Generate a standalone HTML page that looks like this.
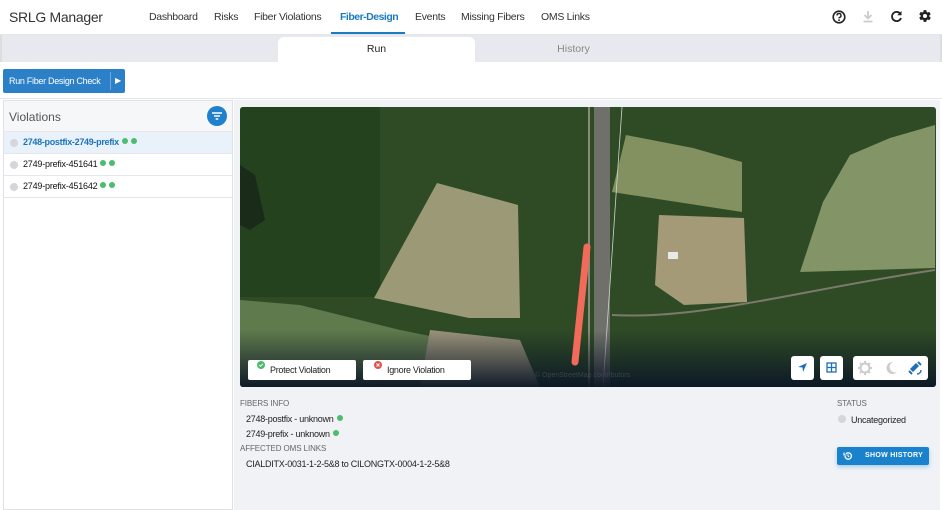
<!DOCTYPE html>
<html><head><meta charset="utf-8">
<style>
*{box-sizing:border-box;margin:0;padding:0}
body{width:942px;height:510px;overflow:hidden;font-family:"Liberation Sans",sans-serif;background:#fff;position:relative;color:#222}
.top{position:absolute;left:0;top:0;width:942px;height:35px;background:#fff;border-bottom:1px solid #e3e5ea}
.brand{position:absolute;left:9px;top:9px;font-size:14px;color:#333;letter-spacing:-0.3px}
.nav{position:absolute;top:11px;font-size:10.5px;color:#333;letter-spacing:-0.3px}
.nav.act{color:#1a7bc1;font-weight:bold;letter-spacing:-0.5px}
.uline{position:absolute;left:331px;top:32px;width:74px;height:2px;background:#1a7bc1}
.tabs{position:absolute;left:0;top:35px;width:942px;height:27px;background:#e7e9ee;border-left:2px solid #ddd;border-right:2px solid #ddd}
.tab{position:absolute;top:2px;height:26px;font-size:10.5px;text-align:center;line-height:24px}
.btn{position:absolute;left:3px;top:69px;width:122px;height:24px;background:#2b80c8;border-radius:2px;color:#fff;font-size:9px;line-height:24px;letter-spacing:-0.3px}
.left{position:absolute;left:3px;top:100px;width:230px;height:410px;background:#fff;border:1px solid #e0e2e7}
.right{position:absolute;left:234px;top:100px;width:706px;height:410px;background:#f1f2f6}
.vh{height:31px;background:#f6f7f9;border-bottom:1px solid #e5e7eb;position:relative}
.row{height:22px;border-bottom:1px solid #e5e7eb;font-size:9px;letter-spacing:-0.2px;line-height:21px;padding-left:19px;position:relative;color:#111}
.row:before{content:"";position:absolute;left:6px;top:7px;width:8px;height:8px;border-radius:50%;background:#d5d6dc}
.g{display:inline-block;width:6px;height:6px;border-radius:50%;background:#4cbc6e;margin-left:3px;vertical-align:1px}
.mb{position:absolute;top:360px;height:20px;background:#fff;border-radius:2px;font-size:9px;line-height:20px;color:#222;letter-spacing:-0.3px}
.lbl{position:absolute;font-size:8px;color:#666;letter-spacing:-0.1px}
.txt{position:absolute;font-size:9px;color:#222;letter-spacing:-0.25px}
</style></head><body>
<div class="top">
<div class="brand">SRLG Manager</div>
<div class="nav" style="left:149px">Dashboard</div>
<div class="nav" style="left:214px">Risks</div>
<div class="nav" style="left:254px">Fiber Violations</div>
<div class="nav act" style="left:340px">Fiber-Design</div>
<div class="nav" style="left:415px">Events</div>
<div class="nav" style="left:461px">Missing Fibers</div>
<div class="nav" style="left:541px">OMS Links</div>
<div class="uline"></div>
<svg style="position:absolute;left:832px;top:10px" width="14" height="14" viewBox="0 0 14 14"><circle cx="7" cy="7" r="5.8" fill="none" stroke="#222" stroke-width="1.6"/><path d="M5 5.5a2 2 0 1 1 2.6 1.9c-.5.2-.6.5-.6 1.1" fill="none" stroke="#222" stroke-width="1.4"/><circle cx="7" cy="10.2" r=".9" fill="#222"/></svg>
<svg style="position:absolute;left:862px;top:10px" width="12" height="13" viewBox="0 0 12 13"><path d="M6 1v7M2.5 5l3.5 3.5L9.5 5M1.5 11.5h9" fill="none" stroke="#ccc" stroke-width="1.8"/></svg>
<svg style="position:absolute;left:890px;top:10px" width="13" height="13" viewBox="0 0 13 13"><path d="M10.5 4A4.6 4.6 0 1 0 11 8" fill="none" stroke="#222" stroke-width="1.8"/><path d="M11.5 1v4.3H7.2z" fill="#222"/></svg>
<svg style="position:absolute;left:918px;top:9px" width="14" height="14" viewBox="0 0 24 24"><path fill="#222" d="M19.4 13c.04-.3.06-.6.06-1s-.02-.7-.06-1l2.1-1.650c.2-.15.24-.42.12-.64l-2-3.46c-.12-.22-.39-.3-.61-.22l-2.490 1c-.52-.4-1.08-.73-1.69-.98l-.38-2.65A.49.49 0 0 0 14 2h-4c-.25 0-.46.18-.49.42l-.38 2.65c-.61.25-1.170.59-1.69.98l-2.49-1c-.23-.09-.49 0-.61.22l-2 3.46c-.13.22-.07.49.12.64L4.57 11c-.04.32-.07.65-.07 1s.02.68.06 1l-2.1 1.65c-.2.15-.24.42-.12.64l2 3.46c.12.22.39.3.61.22l2.49-1c.52.4 1.08.73 1.69.98l.38 2.65c.03.24.24.42.49.42h4c.25 0 .46-.18.49-.42l.38-2.65c.61-.25 1.17-.59 1.69-.98l2.49 1c.23.09.49 0 .61-.22l2-3.46c.12-.22.07-.49-.12-.64L19.4 13zM12 15.5a3.5 3.5 0 1 1 0-7 3.5 3.5 0 0 1 0 7z"/></svg>
</div>
<div class="tabs">
<div class="tab" style="left:276px;width:197px;background:#fff;border-radius:6px 6px 0 0;color:#222">Run</div>
<div class="tab" style="left:473px;width:197px;color:#888">History</div>
</div>
<div class="btn"><span style="padding-left:6px">Run Fiber Design Check</span><span style="position:absolute;left:107px;top:3px;height:18px;border-left:1px solid #6aa7dc"></span><span style="position:absolute;left:112px;top:0;font-size:8px">&#9654;</span></div>
<div style="position:absolute;left:0;top:98px;width:942px;height:1px;background:#e3e5ea"></div>
<div class="left">
<div class="vh"><span style="position:absolute;left:5px;top:9px;font-size:12px;color:#555">Violations</span>
<svg style="position:absolute;left:203px;top:5px" width="20" height="20" viewBox="0 0 20 20"><circle cx="10" cy="10" r="10" fill="#2080cc"/><path d="M5 7h10M7 10h6M8.7 13h2.6" stroke="#fff" stroke-width="1.6"/></svg></div>
<div class="row" style="background:#e9f2fa;color:#1a73bb;font-weight:bold;letter-spacing:-0.3px">2748-postfix-2749-prefix<span class="g"></span><span class="g"></span></div>
<div class="row">2749-prefix-451641<span class="g"></span><span class="g"></span></div>
<div class="row">2749-prefix-451642<span class="g"></span><span class="g"></span></div>
</div>
<div class="right"></div>
<svg style="position:absolute;left:240px;top:107px;border-radius:3px" width="696" height="280" viewBox="240 107 696 280">
<defs><linearGradient id="dk" x1="0" y1="0" x2="0" y2="1"><stop offset="0" stop-color="#0b1626" stop-opacity="0"/><stop offset="1" stop-color="#0b1626" stop-opacity=".95"/></linearGradient></defs>
<rect x="240" y="107" width="696" height="280" fill="#2e4b25"/>
<rect x="240" y="107" width="140" height="190" fill="#25421f"/>
<path d="M240 165 L255 175 L265 220 L250 230 L240 225Z" fill="#1a2b1a"/>
<path d="M437 183 L518 205 L520 318 L469 318 L374 298 L392 265Z" fill="#9c9a76"/>
<path d="M659 215 L744 218 L747 302 L684 305 L655 285Z" fill="#a49a78"/>
<path d="M626 135 L693 148 L742 162 L742 212 L612 192Z" fill="#83905f"/>
<path d="M850 155 L890 138 L935 125 L935 268 L800 272 L823 202Z" fill="#839466"/>
<path d="M240 300 L300 305 L400 330 L450 340 L470 362 L420 387 L240 387Z" fill="#5f7a4c"/>
<path d="M430 330 L520 340 L540 387 L420 387Z" fill="#9a937a"/>
<rect x="594" y="107" width="16" height="280" fill="#6f706a"/>
<rect x="588" y="107" width="2" height="280" fill="#8a8a7c"/>
<line x1="622" y1="107" x2="603" y2="387" stroke="#cfd4d0" stroke-width=".8"/>
<path d="M612 315 C700 320 800 290 935 270" stroke="#7c7a6a" stroke-width="2" fill="none"/>
<rect x="668" y="252" width="10" height="7" fill="#e8eaea"/>
<rect x="240" y="330" width="696" height="57" fill="url(#dk)"/>
<line x1="587" y1="247" x2="575" y2="362" stroke="#f16a5a" stroke-width="7" stroke-linecap="round"/>
</svg>
<div class="mb" style="left:248px;width:108px"><svg style="position:absolute;left:9px;top:1px" width="8" height="8" viewBox="0 0 8 8"><circle cx="4" cy="4" r="4" fill="#4cbc6e"/><path d="M2.2 4l1.3 1.3L5.9 2.8" stroke="#fff" stroke-width="1" fill="none"/></svg><span style="padding-left:22px">Protect Violation</span></div>
<div class="mb" style="left:363px;width:108px"><svg style="position:absolute;left:11px;top:1px" width="8" height="8" viewBox="0 0 8 8"><circle cx="4" cy="4" r="4" fill="#e0504a"/><path d="M2.5 2.5l3 3M5.5 2.5l-3 3" stroke="#fff" stroke-width="1"/></svg><span style="padding-left:24px">Ignore Violation</span></div>
<div style="position:absolute;left:535px;top:372px;font-size:7px;color:#556;opacity:.6">© OpenStreetMap contributors</div>
<div style="position:absolute;left:791px;top:356px;width:23px;height:24px;background:#fff;border-radius:3px"><svg style="margin:6px" width="11" height="11" viewBox="0 0 11 11"><path d="M10 1 L1 5 L5.5 5.5 L6 10Z" fill="#1f6fb8"/></svg></div>
<div style="position:absolute;left:820px;top:356px;width:23px;height:24px;background:#fff;border-radius:3px"><svg style="margin:6px" width="11" height="11" viewBox="0 0 11 11"><rect x="1" y="1" width="9" height="9" fill="none" stroke="#1f6fb8" stroke-width="1.3"/><path d="M5.5 1v9M1 5.5h9" stroke="#1f6fb8" stroke-width="1.3"/></svg></div>
<div style="position:absolute;left:853px;top:356px;width:75px;height:24px;background:#fff;border-radius:3px">
<svg style="position:absolute;left:4px;top:4px" width="16" height="16" viewBox="0 0 16 16"><circle cx="8" cy="8" r="4.5" fill="none" stroke="#ccc" stroke-width="2"/><path d="M8 1v2M8 13v2M1 8h2M13 8h2M3 3l1.4 1.4M11.6 11.6L13 13M3 13l1.4-1.4M11.6 4.4L13 3" stroke="#ccc" stroke-width="2"/></svg>
<svg style="position:absolute;left:30px;top:4px" width="16" height="16" viewBox="0 0 16 16"><path d="M10 2a6 6 0 1 0 4 10A5 5 0 0 1 10 2z" fill="#ccc"/></svg>
<svg style="position:absolute;left:54px;top:4px" width="17" height="17" viewBox="0 0 17 17"><path d="M3 9l6-6 3 3-6 6z" fill="#1f6fb8"/><path d="M2 11l3 3M11 2l3 3" stroke="#1f6fb8" stroke-width="2"/><path d="M10 14a4 4 0 0 0 4-4" stroke="#1f6fb8" stroke-width="1.4" fill="none"/></svg>
</div>
<div class="lbl" style="left:240px;top:399px">FIBERS INFO</div>
<div class="txt" style="left:246px;top:414px">2748-postfix - unknown<span class="g"></span></div>
<div class="txt" style="left:246px;top:429px">2749-prefix - unknown<span class="g"></span></div>
<div class="lbl" style="left:240px;top:444px">AFFECTED OMS LINKS</div>
<div class="txt" style="left:246px;top:459px">CIALDITX-0031-1-2-5&amp;8 to CILONGTX-0004-1-2-5&amp;8</div>
<div class="lbl" style="left:837px;top:399px">STATUS</div>
<div style="position:absolute;left:838px;top:415px;width:8px;height:8px;border-radius:50%;background:#d5d6dc"></div>
<div class="txt" style="left:851px;top:415px">Uncategorized</div>
<div style="position:absolute;left:837px;top:447px;width:92px;height:18px;background:#1a82cc;border-radius:2px;color:#fff;font-size:7px;font-weight:bold;line-height:18px;box-shadow:0 2px 4px rgba(26,130,204,.35)"><svg style="position:absolute;left:6px;top:4px" width="10" height="10" viewBox="0 0 10 10"><path d="M2 5a3.2 3.2 0 1 0 1-2.3" fill="none" stroke="#fff" stroke-width="1.3"/><path d="M1 1.5v2.5h2.5" fill="none" stroke="#fff" stroke-width="1.1"/><path d="M5 3.3V5l1.2.8" fill="none" stroke="#fff" stroke-width="1"/></svg><span style="padding-left:28px;letter-spacing:.3px">SHOW HISTORY</span></div>
</body></html>
